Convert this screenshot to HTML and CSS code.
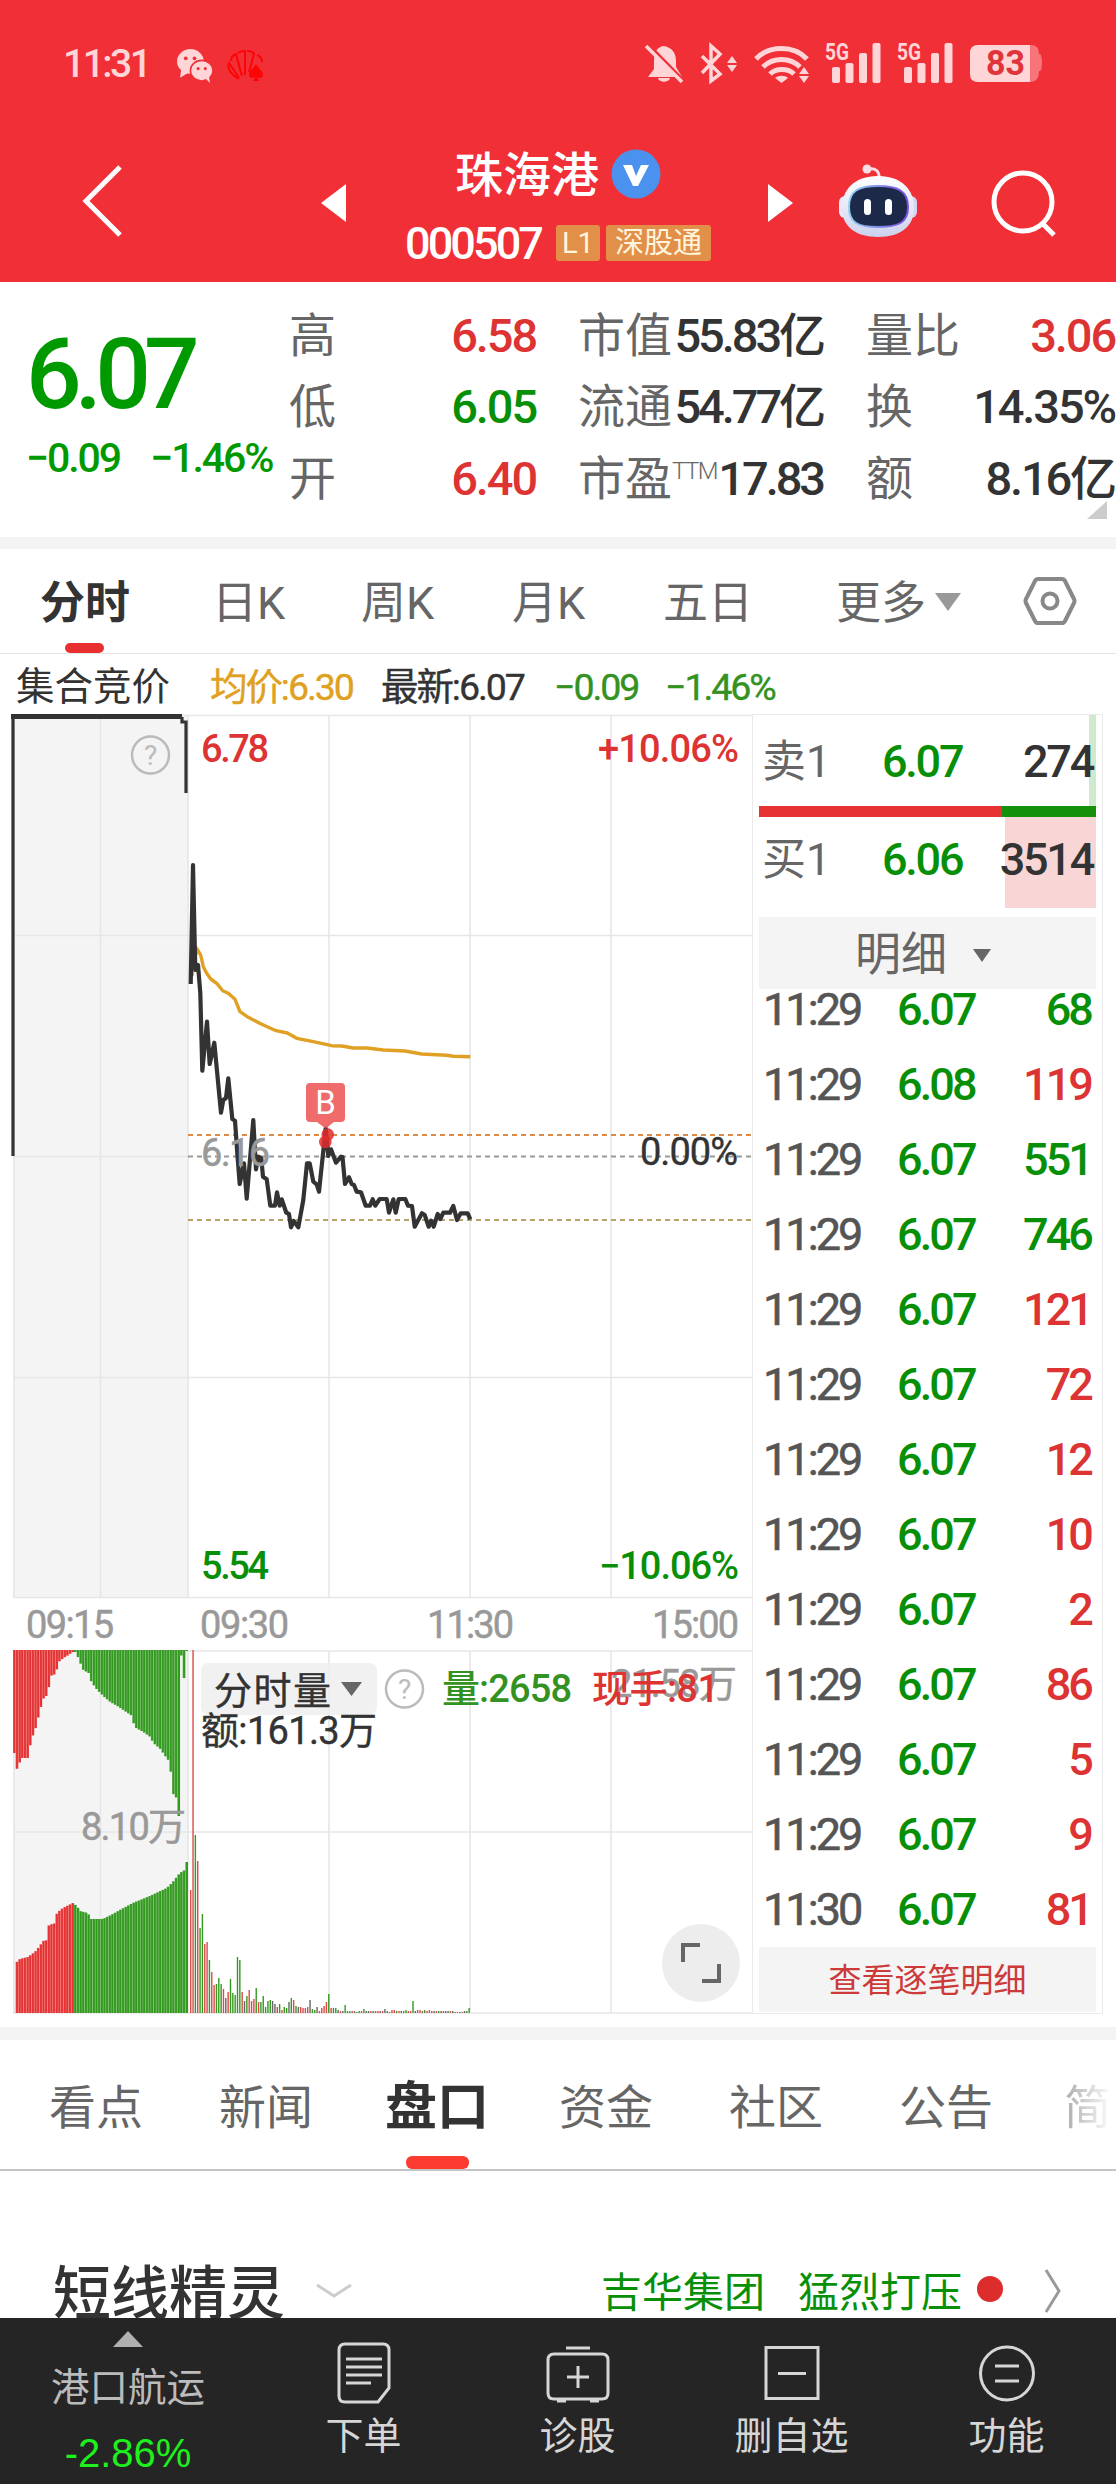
FILE: index.html
```html
<!DOCTYPE html>
<html lang="zh-CN">
<head>
  <meta charset="UTF-8" />
  <meta name="viewport" content="width=device-width, initial-scale=1.0"/>
  <title>珠海港 000507</title>
  <link rel="stylesheet" href="styles.css">
</head>
<body>
  <header class="top">
    <div class="status">
      <span class="clock">11:31</span>
      <svg class="wechat" viewBox="0 0 36 32">
        <ellipse cx="14" cy="12" rx="13" ry="12"/><path d="M5 20l-1 8 8-5z"/>
        <ellipse class="ring" cx="25" cy="21" rx="11" ry="10"/><path d="M29 29l4 4-1-7z"/>
        <circle class="eye" cx="9.500" cy="9" r="1.800"/><circle class="eye" cx="18" cy="9" r="1.800"/>
        <circle class="eye" cx="21.500" cy="19" r="1.500"/><circle class="eye" cx="28.500" cy="19" r="1.500"/>
      </svg>
      <svg class="huawei" viewBox="0 0 38 32">
        <path d="M12 29C3 24 0 19 2 13l10 15M4 11c0-4 2-6 5-7l6 22M11 3c3-2 5-2 7-2v24M20 1c4 0 6 1 7 3l-5 18M30 5c3 1 5 4 5 7"/>
        <path class="spade" d="M29 14c3 5 7 7 7 11 0 3-4 4-6 2l2 4h-6l2-4c-3 2-6 1-6-2 0-4 4-6 7-11z"/>
      </svg>
      <svg class="sysicons" viewBox="640 40 410 50">
        <path d="M663 47c9 1 13 7 13 15v6l6 10h-34l6-8c0-15 0-20 9-23zM658 79h12c-1 5-11 5-12 0z"/>
        <path class="cut" d="M650 47l36 37"/>
        <path class="line3" d="M646 47l36 36"/>
        <path class="line3" d="M702 57l18 18-9 7V47l9 8-18 19"/>
        <path d="M732 57l5 7h-10zM732 73l5-7h-10z"/>
        <path class="line4" d="M756 60c13-14 38-14 51 0M763 68c10-10 27-10 37 0M770 75c6-6 18-6 24 0"/>
        <path d="M775 79c4-3 10-3 13 0l-6.500 5zM804 68l5 7h-10zM804 84l5-7h-10z"/>
        <g id="signal">
          <text class="g5" x="825" y="61" textLength="24" lengthAdjust="spacingAndGlyphs">5G</text>
          <rect x="832" y="68" width="8" height="16" rx="2"/><rect x="845.500" y="64" width="8" height="20" rx="2"/>
          <rect x="859" y="54" width="8" height="30" rx="2"/><rect x="872.500" y="44" width="8" height="40" rx="2"/>
        </g>
        <use href="#signal" x="72"/>
        <path class="bat-empty" d="M1020 46h11q8 0 8 9h1q2 2 2 9t-2 8h-1q0 11-8 11h-11z"/>
        <path d="M978 46h52v37h-52q-8 0-8-8V54q0-8 8-8z"/>
        <text class="bat" x="986" y="76" textLength="39" lengthAdjust="spacingAndGlyphs">83</text>
      </svg>
    </div>
    <nav class="nav">
      <svg class="back" viewBox="0 0 44 74"><path d="M40 3L6 37l34 34"/></svg>
      <svg class="tri" viewBox="0 0 26 38"><path d="M25 0v38L0 19z"/></svg>
      <div class="title">
        <div class="name">珠海港
          <svg viewBox="0 0 50 50"><circle cx="25" cy="25" r="24.500"/><path d="M12 16h9l4 11 5-11h8L27 37h-5z"/></svg>
        </div>
        <div class="code"><b class="num">000507</b><span class="tag l1">L1</span><span class="tag">深股通</span></div>
      </div>
      <svg class="tri" viewBox="0 0 26 38"><path d="M0 0v38l25-19z"/></svg>
      <svg class="robot" viewBox="838 162 84 78">
        <defs>
          <linearGradient id="shell" x2="0" y2="1"><stop offset="0" stop-color="#fff"/><stop offset="1" stop-color="#ccd2ee"/></linearGradient>
          <linearGradient id="rim"><stop offset="0" stop-color="#8fd0f0"/><stop offset="1" stop-color="#7a4be0"/></linearGradient>
        </defs>
        <path class="antenna" d="M869 169c8-1 11 2 11 8"/><circle cx="868" cy="169" r="4.500" fill="#fbdfe6"/>
        <rect x="840" y="196" width="12" height="22" rx="6" fill="#e9e9fa"/><rect x="906" y="196" width="12" height="22" rx="6" fill="#d5d4f5"/>
        <path d="M879 176c24 0 36 14 36 32s-13 29-36 29-36-11-36-29 12-32 36-32z" fill="url(#shell)"/>
        <path d="M879 186c20 0 30 5 30 21s-10 20-30 20-29-4-29-20 9-21 29-21z" fill="#1d2949" stroke="url(#rim)" stroke-width="2"/>
        <rect x="865" y="199" width="7" height="16" rx="3.500" fill="#fff"/><rect x="886" y="199" width="7" height="16" rx="3.500" fill="#fff"/>
      </svg>
      <svg class="search" viewBox="0 0 68 68"><circle cx="33" cy="32" r="29"/><path d="M53 54l11 11"/></svg>
    </nav>
  </header>

  <section class="quote">
    <div class="now">
      <div class="price num">6.07</div>
      <div class="chg num"><span>−0.09</span><span>−1.46%</span></div>
    </div>
    <dl class="c1">
      <dt>高</dt><dd class="num up">6.58</dd>
      <dt>低</dt><dd class="num down">6.05</dd>
      <dt>开</dt><dd class="num up">6.40</dd>
    </dl>
    <dl class="c2">
      <dt>市值</dt><dd class="num">55.83亿</dd>
      <dt>流通</dt><dd class="num">54.77亿</dd>
      <dt>市盈<sup>TTM</sup></dt><dd class="num">17.83</dd>
    </dl>
    <dl class="c3">
      <dt>量比</dt><dd class="num up">3.06</dd>
      <dt>换</dt><dd class="num">14.35%</dd>
      <dt>额</dt><dd class="num">8.16亿</dd>
    </dl>
    <i class="corner"></i>
  </section>

  <nav class="ktabs">
    <span class="active">分时</span>
    <span>日K</span>
    <span>周K</span>
    <span>月K</span>
    <span>五日</span>
    <span>更多<i class="caret"></i></span>
    <svg viewBox="0 0 54 50"><path d="M15 3h24q2 0 3 2l9 18q1 2 0 4l-9 18q-1 2-3 2H15q-2 0-3-2L3 27q-1-2 0-4l9-18q1-2 3-2z"/><circle cx="27" cy="25" r="7.500"/></svg>
  </nav>

  <div class="info">
    <span class="call">集合竞价</span>
    <span class="avg num">均价:6.30</span>
    <span class="num">最新:6.07</span>
    <span class="num leaf">−0.09</span>
    <span class="num leaf">−1.46%</span>
  </div>

  <main class="market">
    <svg class="chart" viewBox="0 713 752 1303">
      <!-- price grid -->
      <rect x="13" y="715" width="176" height="883" fill="#f4f4f4"/>
      <rect x="13" y="1651" width="176" height="362" fill="#f4f4f4"/>
      <path class="grid" d="M13 715.500H752M13 935.500H752M13 1156.500H189M13 1377.500H752M13 1597.500H752M13 1651H752M13 1832H752M13 2013H752"/>
      <path class="grid" d="M14 715V1598M100.500 715V1598M188 715V1598M329 715V1598M470 715V1598M611 715V1598M14 1651V2013M100.500 1651V2013M188 1651V2013M329 1651V2013M470 1651V2013M611 1651V2013"/>
      <path class="dash" stroke="#dd8a44" d="M188 1135H752"/>
      <path class="dash" stroke="#999" d="M188 1156.500H752"/>
      <path class="dash" stroke="#b7a26e" d="M188 1220H752"/>

      <!-- call auction -->
      <path d="M11 716.500H182" stroke="#333" stroke-width="5"/>
      <path class="auction" d="M13 715V1156M182 717V722H186V793"/>

      <polyline class="avgline" points="192,976 196.700,948.300 200.700,955 203.300,966.700 206.700,973.300 210.700,979 216.700,983.300 222.700,990.700 228.300,993.300 235,999.300 240,1011.700 248.300,1017.300 261.700,1024.300 276,1030.700 287.300,1033 296.700,1038.300 313.300,1041.700 331.700,1045.700 341.700,1046 353.300,1048 366.700,1048 383.300,1050 405,1051 421.700,1054 446.700,1055.300 453.300,1056.300 470.300,1056.700"/>
      <polyline class="priceline" points="190.700,984 193,865 195.300,970 198,965 200.300,993 202.300,1070.700 207,1021.700 209.700,1064 214.300,1042.700 221,1112.700 223.300,1100 226,1098 228.300,1078.300 232.300,1119 235,1120.700 237.300,1153.300 239.700,1184 244,1163.300 246.700,1198.700 253.300,1120 256,1169.300 258.300,1156.700 261.300,1158.300 263,1176.700 266.700,1179.300 270.300,1205.700 275,1205.700 277,1192.300 279.700,1205.700 281.700,1199.300 286.300,1212.700 289,1214 291,1227.300 293.700,1221 298.300,1227.300 303.300,1200 307,1163.300 309.700,1163.300 313.300,1181.700 316.700,1184.300 319,1191.700 325.700,1128.300 328.300,1156 331,1149.300 336,1162.700 341,1156.700 342.500,1157 345,1184 349,1177.300 351.700,1184 354,1185 356.700,1191.700 361,1192.300 365.700,1205.700 370,1205.700 372.700,1199.300 375.300,1205.700 379.700,1199 386.700,1199 389,1212.700 393.300,1199.300 395.700,1212.700 398.700,1199 405.300,1199 408,1205.700 412,1206 414.700,1226.700 418.300,1220 422,1213.300 424.700,1215 428.700,1226.700 431,1220.700 433.700,1226.700 437.700,1214 440.300,1219 443.300,1212.700 450,1212.700 453.300,1206 457,1220 460.700,1213.300 467.700,1213.300 470.300,1219.300"/>

      <circle cx="327.700" cy="1134.500" r="6.300" fill="#e02c2c" opacity=".85"/>
      <circle cx="325.300" cy="1142" r="6.300" fill="#e02c2c" opacity=".85"/>
      <path d="M310 1083h31q4 0 4 4v31q0 4-4 4h-7l-8.500 6.500-8.500-6.500h-7q-4 0-4-4v-31q0-4 4-4z" fill="#ee5555" opacity=".87"/>
      <text class="buy" x="325.500" y="1114" text-anchor="middle">B</text>

      <g class="axis">
        <text class="up" x="201" y="762" textLength="68">6.78</text>
        <text class="up" x="598" y="762" textLength="141">+10.06%</text>
        <text class="dim" x="201" y="1166" textLength="69">6.16</text>
        <text x="640" y="1165" textLength="98">0.00%</text>
        <text class="down" x="201" y="1579" textLength="68">5.54</text>
        <text class="down" x="599" y="1579" textLength="140">−10.06%</text>
        <text class="dim" x="26" y="1638" textLength="88">09:15</text>
        <text class="dim" x="200" y="1638" textLength="89">09:30</text>
        <text class="dim" x="427" y="1638" textLength="87">11:30</text>
        <text class="dim" x="652" y="1638" textLength="87">15:00</text>
      </g>
      <g class="help"><circle cx="150.500" cy="755" r="18.500"/><text x="150.500" y="765" text-anchor="middle">?</text></g>

      <!-- volume -->
      <g id="auction"></g>
      <g id="volume"></g>
      <g class="axis">
        <text class="dim" x="81" y="1840" textLength="105">8.10万</text>
        <rect x="201" y="1663" width="176" height="52" rx="7" fill="#eee" opacity=".85"/>
        <text x="214" y="1704" textLength="117">分时量</text>
        <path d="M341 1682h21l-10.500 14z" fill="#666"/>
        <text x="201" y="1744" textLength="176">额:161.3万</text>
        <text class="dim" x="611" y="1697" textLength="126">21.58万</text>
        <text class="leaf" x="442" y="1702" textLength="130">量:2658</text>
        <text class="up" x="592" y="1702" textLength="127">现手:81</text>
      </g>
      <g class="help"><circle cx="404.500" cy="1689" r="18.500"/><text x="404.500" y="1699" text-anchor="middle">?</text></g>
      <circle cx="701" cy="1963" r="39" fill="#ededed"/>
      <path d="M683 1962V1945H700M719 1964V1981H702" fill="none" stroke="#666" stroke-width="4"/>
    </svg>

    <aside class="book">
      <div class="order ask"><span>卖1</span><b class="num">6.07</b><em class="num">274</em></div>
      <div class="ratio"></div>
      <div class="order bid"><span>买1</span><b class="num">6.06</b><em class="num">3514</em></div>
      <div class="detail">明细<i class="caret"></i></div>
      <div class="ticks"><ul id="ticks"></ul></div>
      <div class="more">查看逐笔明细</div>
    </aside>
  </main>

  <nav class="tabs">
    <span>看点</span>
    <span>新闻</span>
    <span class="active">盘口</span>
    <span>资金</span>
    <span>社区</span>
    <span>公告</span>
    <span class="fade">简</span>
  </nav>

  <section class="sprite">
    <h2>短线精灵</h2>
    <svg class="chev-down" viewBox="0 0 38 16"><path d="M2 2l17 11L36 2"/></svg>
    <span class="stock">吉华集团</span>
    <span class="act">猛烈打压</span>
    <i class="dot"></i>
    <svg class="chev-right" viewBox="0 0 18 46"><path d="M2 2l13 21L2 44"/></svg>
  </section>

  <footer class="bar">
    <div class="sector"><i></i><span>港口航运</span><b>-2.86%</b></div>
    <div class="item">
      <svg viewBox="0 0 64 64"><path d="M13 4h38q6 0 6 6v38L46 62H13q-6 0-6-6V10q0-6 6-6zM14 19h36M14 27h36M14 35h36M14 43h25"/></svg>
      <span>下单</span>
    </div>
    <div class="item">
      <svg viewBox="0 0 64 64"><path d="M20 8h24M8 14h48q6 0 6 6v33q0 6-6 6H8q-6 0-6-6V20q0-6 6-6zM11 61h9M44 61h9M32 26v22M21 37h22"/></svg>
      <span>诊股</span>
    </div>
    <div class="item">
      <svg viewBox="0 0 64 64"><path d="M6 7.500h52v51H6zM18 33.500h28"/></svg>
      <span>删自选</span>
    </div>
    <div class="item">
      <svg viewBox="0 0 64 64"><circle cx="32" cy="33.500" r="26.500"/><path d="M20 26h24M20 41h24"/></svg>
      <span>功能</span>
    </div>
  </footer>

  <script>
    const ticks = [
      ['11:29', '6.07', 68, 'down'], ['11:29', '6.08', 119, 'up'], ['11:29', '6.07', 551, 'down'],
      ['11:29', '6.07', 746, 'down'], ['11:29', '6.07', 121, 'up'], ['11:29', '6.07', 72, 'up'],
      ['11:29', '6.07', 12, 'up'], ['11:29', '6.07', 10, 'up'], ['11:29', '6.07', 2, 'up'],
      ['11:29', '6.07', 86, 'up'], ['11:29', '6.07', 5, 'up'], ['11:29', '6.07', 9, 'up'],
      ['11:30', '6.07', 81, 'up']
    ];
    document.getElementById('ticks').innerHTML = ticks.map(t =>
      `<li class="num"><span>${t[0]}</span><b>${t[1]}</b><em class="${t[3]}">${t[2]}</em></li>`).join('');

    const RED = '#e63232', GREEN = '#339a20';

    // unmatched (hanging from the top) and matched (from the bottom) auction volume
    const hang = [[13,84],[15,122],[18,116],[21,108],[28,108],[31,88],[34,83],[38,67],[41,55],[44,46],[48,46],[49,27],[52,25],[56,24],[57,13],[63,8],[68,5],[74,1],
      [76,3],[80,13],[83,20],[90,24],[91,32],[97,40],[104,47],[110,52],[117,56],[123,60],[132,66],[134,77],[143,82],[150,87],[153,93],[160,99],[167,109],[170,112],[171,134],[173,144],[177,149],[178,166],[180,166],[181,5],[183,28],[185,28],[186,1],[188,1]];
    const stack = [[15,49],[20,54],[28,56],[35,61],[40,67],[43,72],[48,73],[49,88],[56,90],[57,100],[63,105],[73,110],
      [77,107],[80,102],[88,100],[91,94],[103,94],[113,99],[120,103],[133,110],[150,117],[167,125],[173,131],[180,140],[185,143],[186,151],[188,151]];

    function valueAt(pts, x) {
      for (let i = 1; i < pts.length; i++) {
        if (x <= pts[i][0]) {
          const [x0, y0] = pts[i - 1], [x1, y1] = pts[i];
          return y0 + (y1 - y0) * Math.max(0, x - x0) / (x1 - x0);
        }
      }
      return 0;
    }

    let out = '';
    const step = 175 / 66;
    for (let i = 0; i < 66; i++) {
      const x = 13 + i * step;
      const color = x < 72 ? RED : GREEN;
      const h = valueAt(hang, x + 1);
      const s = i ? valueAt(stack, x + 1.5) : 0;
      out += `<rect x="${x}" y="1650" width="${step}" height="${h}" fill="${color}"/>`;
      out += `<rect x="${x}" y="${2013 - s}" width="${step}" height="${s}" fill="${color}"/>`;
      out += `<path d="M${x} 1650v${h}M${x} 2013v${-s}" stroke="#fff" stroke-width=".6" opacity=".3"/>`;
    }
    document.getElementById('auction').innerHTML = out;

    // one bar a minute: height + colour (r up, g down, k flat)
    const vols = ('123r 363r 178g 152r 85g 99g 69r 71r 53g 41r 28r 29g 35g 29g 24r 15k 21r 34g 20g 18g 56g 53g 21r 12k 17g 23r 12r 14r 25g 11r 11g 17g 6g 12g 13g 12k 9k 6r 9g 3r 6g 5g 11k 15g 13r 7g ' +
      '6k 6r 5r 5r 6r 13k 4g 3g 6k 2r 5r 7r 11r 19g 5r 5g 5g 3k 2r 2k 8g 2g 2g 2r 2k 1g 2g 2r 4g 2k 2k 2r 2g 2r 2r 2k 2r 4k 2g 1r 3r 3r 2g 2r 2k 2g 3g 2r 2r 12g 2k 3r 3r 2k 3g 2r 3r 2r 2k 2r 2g 2k 2r 2k 2g 2r 2k 1g 1r 1k 1r 2k 2g 5g').split(' ');
    const colors = { r: '#dd4a4a', g: GREEN, k: '#666' };
    document.getElementById('volume').innerHTML = vols.map((v, i) =>
      `<rect x="${190 + i * 2.34}" y="${2013 - parseInt(v)}" width="1.4" height="${parseInt(v)}" fill="${colors[v.slice(-1)]}"/>`).join('');
  </script>
</body>
</html>
```
FILE: styles.css
```css
* {
  box-sizing: border-box;
}
body {
  margin: 0;
  width: 1116px;
  height: 2484px;
  overflow: hidden;
  background: #fff;
  color: #333;
  font-family: Roboto, "Noto Sans CJK SC", sans-serif;
}
svg {
  display: block;
}
b, em {
  font-style: normal;
  font-weight: 500;
}
.num {
  font-weight: 500;
  letter-spacing: -0.065em;
}
.up { color: #dd3333; fill: #dd3333; }
.down { color: #079007; fill: #079007; }
.leaf { color: #339222; fill: #339222; }

/* header */
.top {
  height: 282px;
  background: #f12f36;
  color: #fff;
}
.status {
  display: flex;
  align-items: center;
  height: 128px;
  padding-left: 63px;
}
.clock {
  width: 113px;
  font-size: 39px;
  font-weight: 500;
  letter-spacing: -2.5px;
  color: #ffd5d7;
}
.wechat {
  width: 37px;
  height: 33px;
  margin-top: 2px;
  fill: #ffd5d7;
  overflow: visible;
}
.wechat .ring { stroke: #f12f36; stroke-width: 1.5; }
.wechat .eye { fill: #f12f36; }
.huawei {
  width: 38px;
  height: 32px;
  margin: 4px 0 0 14px;
  fill: none;
  stroke: #fb0505;
  stroke-width: 2;
}
.huawei .spade { fill: #fb0505; stroke: none; }
.sysicons {
  width: 410px;
  height: 50px;
  margin-left: 375px;
  fill: #ffd5d7;
}
.sysicons .line3 { fill: none; stroke: #ffd5d7; stroke-width: 3.5; }
.sysicons .line4 { fill: none; stroke: #ffd5d7; stroke-width: 5; }
.sysicons .cut { stroke: #f12f36; stroke-width: 3; }
.g5 { font-size: 23px; font-weight: 700; }
.bat { font-size: 35px; font-weight: 700; fill: #e0343a; }
.bat-empty { fill: #f87479; }
.nav {
  display: grid;
  grid-template-columns: 321px 78px 359px 79px 131px 1fr;
  align-items: start;
  height: 154px;
}
.back {
  width: 44px;
  height: 74px;
  margin: 36px 0 0 80px;
  fill: none;
  stroke: #fff;
  stroke-width: 5;
}
.tri {
  width: 26px;
  height: 38px;
  margin-top: 56px;
  fill: #fff;
}
.nav > .tri:nth-of-type(3) { margin-left: 10px; }
.title {
  display: flex;
  flex-direction: column;
  align-items: center;
  padding: 13px 41px 0 0;
}
.name {
  display: flex;
  align-items: center;
  gap: 12px;
  height: 70px;
  font-size: 48px;
  line-height: 70px;
  font-weight: 500;
}
.name svg {
  width: 50px;
  height: 50px;
  margin-top: -4px;
  fill: #4a92ee;
}
.name path { fill: #fff; }
.code {
  display: flex;
  align-items: center;
  height: 64px;
  font-size: 45px;
}
.tag {
  height: 36px;
  margin-left: 6px;
  padding: 0 9px;
  border-radius: 3px;
  background: #e28f4a;
  color: #fff5dd;
  font-size: 29px;
  line-height: 36px;
}
.tag.l1 { margin-left: 15px; padding: 0 6px; }
.robot {
  width: 84px;
  height: 78px;
  margin-top: 34px;
}
.antenna { fill: none; stroke: #fbdfe6; stroke-width: 3; }
.search {
  width: 68px;
  height: 68px;
  margin: 42px 0 0 22px;
  fill: none;
  stroke: #fff;
  stroke-width: 5;
}

/* quote */
.quote {
  position: relative;
  display: flex;
  height: 267px;
  padding-top: 18px;
  border-bottom: 12px solid #f4f4f4;
}
.now {
  flex: none;
  width: 289px;
  padding: 23px 0 0 26px;
  color: #009a00;
}
.price {
  height: 100px;
  font-size: 98px;
  line-height: 104px;
  font-weight: 500;
  letter-spacing: -0.07em;
}
.chg {
  display: flex;
  gap: 30px;
  margin-top: 11px;
  font-size: 41px;
  line-height: 48px;
  letter-spacing: -0.05em;
  white-space: nowrap;
}
.quote dl {
  flex: none;
  display: grid;
  grid-template-columns: 90px 1fr;
  grid-auto-rows: 71.3px;
  align-items: center;
  margin: 0;
  font-size: 47px;
  line-height: 71px;
  white-space: nowrap;
}
.quote dt { color: #666; }
.quote dd { margin: 0; text-align: right; }
.quote sup {
  font-size: 24px;
  line-height: 0;
  font-weight: 300;
  letter-spacing: -1.5px;
  vertical-align: 16px;
}
.quote .c1 { width: 247px; }
.quote .c2 { width: 245px; margin-left: 42px; }
.quote .c3 { width: 249px; margin-left: 43px; }
.c1 .num, .c3 .num { letter-spacing: -0.045em; }
.corner {
  position: absolute;
  right: 9px;
  bottom: 18px;
  border-left: 20px solid transparent;
  border-bottom: 18px solid #ccc;
}

/* period tabs */
.ktabs {
  display: grid;
  grid-template-columns: 172px 149px 151px 151px 173px 187px 1fr;
  align-items: center;
  height: 105px;
  padding-left: 40px;
  border-bottom: 1px solid #e4e4e4;
  font-size: 45px;
  color: #666;
}
.ktabs span {
  height: 104px;
  line-height: 109px;
  white-space: nowrap;
}
.ktabs .active {
  width: 90px;
  font-weight: 700;
  color: #333;
}
.ktabs .active, .tabs .active { position: relative; }
.ktabs .active::after {
  content: "";
  position: absolute;
  left: 25px;
  bottom: 0;
  width: 39px;
  height: 10px;
  border-radius: 5px;
  background: #e83030;
}
.caret {
  display: inline-block;
  margin-left: 9px;
  border: 13px solid transparent;
  border-top: 18px solid #999;
  border-bottom: 0;
  vertical-align: 8px;
}
.ktabs svg {
  width: 54px;
  height: 50px;
  fill: none;
  stroke: #888;
  stroke-width: 4;
}
.info {
  display: grid;
  grid-template-columns: 194px 171px 173px 111px 1fr;
  height: 60px;
  padding: 4px 0 0 16px;
  font-size: 38.5px;
  line-height: 58px;
  white-space: nowrap;
}
.info .num { font-size: 37.5px; font-weight: 400; letter-spacing: -0.055em; -webkit-text-stroke: 0.4px; }
.avg { color: #e0a020; }

/* chart */
.market {
  display: flex;
  height: 1326px;
  border-bottom: 13px solid #f4f4f4;
}
.chart {
  flex: none;
  width: 752px;
  height: 1303px;
  margin-top: -1px;
}
.grid { stroke: #e6e6e6; stroke-width: 1.6; fill: none; }
.dash { stroke-width: 1.8; stroke-dasharray: 5 4; }
.auction { fill: none; stroke: #333; stroke-width: 3.2; }
.avgline, .priceline { fill: none; stroke-width: 3.4; stroke: #dfa024; stroke-linejoin: round; }
.priceline { stroke: #333; stroke-width: 4.2; }
.buy { font-size: 33px; fill: #fff; }
.axis text { font-size: 38px; font-weight: 500; }
.axis text:not([class]) { fill: #333; font-weight: 400; stroke: #333; stroke-width: .4; }
.axis .dim { fill: #999; font-weight: 400; stroke: #999; stroke-width: .5; }
.help circle { fill: none; stroke: #bbb; stroke-width: 2.5; }
.help text { font-size: 28px; fill: #bbb; }

/* order book */
.book {
  width: 351px;
  height: 1300px;
  padding: 0 5px 0 6px;
  border: 1px solid #eaeaea;
}
.order {
  display: grid;
  grid-template-columns: 120px 1fr auto;
  align-items: center;
  height: 91px;
  padding: 3px 3px 0 3px;
  margin-right: 1px;
  font-size: 45px;
  line-height: 60px;
}
.order span { margin-top: -1px; font-size: 44px; color: #666; }
.order .num { letter-spacing: -0.05em; }
.order b, .ticks b { color: #079007; }
.ask { background: linear-gradient(#cfe9cf, #cfe9cf) right / 7px 100% no-repeat; }
.bid { background: linear-gradient(#f9d6d6, #f9d6d6) right / 91px 100% no-repeat; padding: 0 3px 5px 3px; }
.ratio {
  height: 11px;
  margin-right: 1px;
  background: linear-gradient(90deg, #e63232 243px, #15900a 243px);
}
.detail {
  height: 72px;
  margin: 9px 1px 0 0;
  padding-left: 96px;
  background: #f4f4f4;
  color: #666;
  font-size: 46px;
  line-height: 74px;
}
.detail .caret {
  margin-left: 26px;
  border-width: 13px 9.5px 0;
  border-top-color: #666;
}
.ticks {
  height: 958px;
  overflow: hidden;
}
.ticks ul {
  margin: -17px 6px 0 4px;
  padding: 0;
  list-style: none;
}
.ticks li {
  display: grid;
  grid-template-columns: 134px 1fr auto;
  height: 75px;
  font-size: 45px;
  line-height: 75px;
}
.ticks span { color: #555; font-weight: 400; -webkit-text-stroke: 0.6px; }
.more {
  height: 65px;
  margin-right: 1px;
  background: #f4f4f4;
  color: #cc3a3a;
  font-size: 33px;
  line-height: 67px;
  text-align: center;
}

/* lower tabs */
.tabs {
  display: grid;
  grid-template-columns: 170px 166px 174px 170px 170px 165px 1fr;
  height: 131px;
  padding-left: 49px;
  border-bottom: 2px solid #c4c4c4;
  font-size: 47px;
  line-height: 136px;
  color: #666;
  white-space: nowrap;
  overflow: hidden;
}
.tabs .active {
  width: 104px;
  height: 129px;
  font-size: 52px;
  font-weight: 700;
  color: #333;
}
.tabs .active::after {
  content: "";
  position: absolute;
  left: 21px;
  bottom: 0;
  width: 63px;
  height: 13px;
  border-radius: 6px;
  background: #fc3b30;
}
.fade {
  background: linear-gradient(90deg, #aaa, #fff 48px);
  -webkit-background-clip: text;
  color: transparent;
}
.sprite {
  display: flex;
  align-items: center;
  height: 147px;
  padding: 93px 0 0 53px;
  overflow: hidden;
  font-size: 41px;
  color: #079007;
}
.sprite > * { flex: none; }
.sprite span { margin-top: -4px; }
.sprite h2 {
  width: 262px;
  margin: 5px 0 0;
  font-size: 58px;
  line-height: 80px;
  font-weight: 500;
  color: #333;
}
.chev-down, .chev-right { fill: none; stroke: #ccc; stroke-width: 3; }
.chev-down { width: 38px; height: 16px; }
.chev-right { width: 18px; height: 46px; margin-left: 41px; stroke: #999; }
.stock { margin-left: 248px; }
.act { margin-left: 33px; }
.dot {
  width: 26px;
  height: 26px;
  margin: -4px 0 0 15px;
  border-radius: 50%;
  background: #dd2c2c;
}

/* bottom bar */
.bar {
  display: grid;
  grid-template-columns: 256px 215px 213px 215px 215px;
  height: 166px;
  background: #252525;
  color: #d6d6d6;
  font-size: 38px;
}
.sector {
  display: flex;
  flex-direction: column;
  align-items: center;
  padding-top: 13px;
  color: #bbb;
}
.sector i {
  border: 15px solid transparent;
  border-bottom: 16px solid #b0b0b0;
  border-top: 0;
}
.sector span { margin-top: 12px; font-size: 38.5px; line-height: 58px; }
.sector b { margin-top: 9px; font-family: "Liberation Sans", sans-serif; font-size: 40px; line-height: 54px; font-weight: 400; color: #1ef01e; }
.item {
  display: flex;
  flex-direction: column;
  align-items: center;
  padding-top: 22px;
}
.item svg {
  width: 64px;
  height: 64px;
  fill: none;
  stroke: #d6d6d6;
  stroke-width: 3;
}
.item span { margin-top: 3px; line-height: 58px; }
```
